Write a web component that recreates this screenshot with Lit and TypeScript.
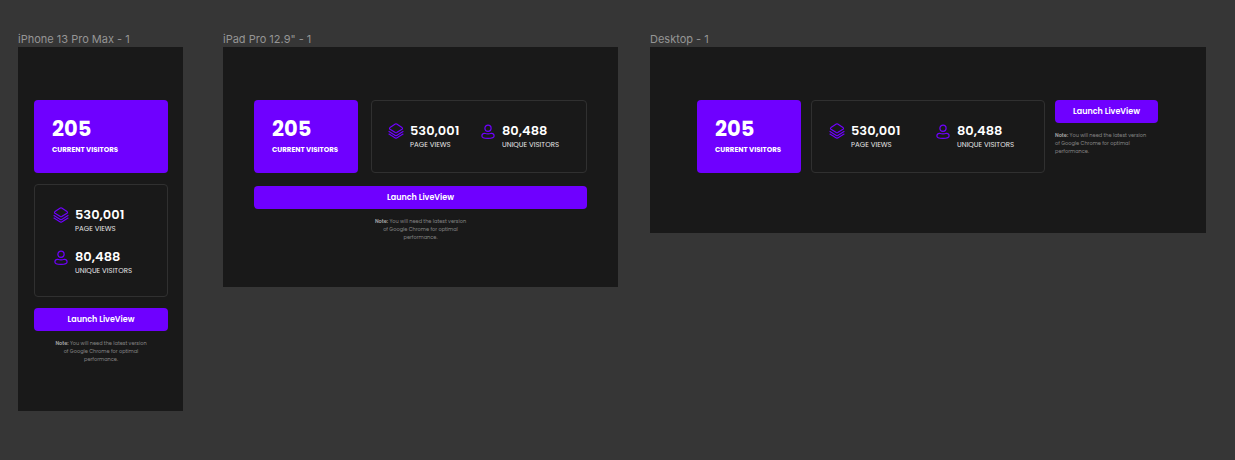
import { LitElement, html, css, svg } from "lit";
import { customElement, property } from "lit/decorators.js";

const layersIcon = svg`
  <path d="M7.3 1.1Q8 .7 8.7 1.1L14 4.6Q15 5.4 14 6.2L8.7 9.6Q8 10 7.3 9.6L2 6.2Q1 5.4 2 4.6Z" />
  <path d="M1 8.5 7.3 12.4Q8 12.8 8.7 12.4L15 8.5" />
  <path d="M1 11.1 7.3 15Q8 15.4 8.7 15L15 11.1" />
`;

const personIcon = svg`
  <circle cx="8" cy="5.2" r="3.1" />
  <path d="M4.6 10.3Q8 11.4 11.4 10.3C13 10.1 14.1 11.4 14.1 13 14.1 14.5 12.8 15.4 8 15.4S1.9 14.5 1.9 13C1.9 11.4 3 10.1 4.6 10.3Z" />
`;

type Layout = "phone" | "tablet" | "desktop";

@customElement("visitor-panel")
class VisitorPanel extends LitElement {
  @property({ reflect: true }) layout: Layout = "phone";

  static styles = css`
    :host {
      display: block;
      background: #191919;
      color: #fff;
      font-family: Poppins, Inter, "Open Sans", sans-serif;
    }
    .panel {
      display: grid;
      align-items: start;
    }
    .current {
      background: #6f00ff;
      border-radius: 4px;
      padding: 18px 18px 19px;
    }
    .total {
      margin: 0 0 6px;
      font-size: 21px;
      line-height: 22px;
      font-weight: 700;
    }
    .caption {
      margin: 0;
      font-size: 7px;
      line-height: 8px;
      font-weight: 700;
      white-space: nowrap;
    }
    .stats {
      display: grid;
      border: 1px solid #303030;
      border-radius: 4px;
      row-gap: 16px;
    }
    .stat {
      display: flex;
      gap: 6px;
    }
    .icon {
      width: 16px;
      height: 16px;
      flex: none;
      fill: none;
      stroke: #6f00ff;
      stroke-width: 1.2;
      stroke-linecap: round;
      stroke-linejoin: round;
    }
    .value {
      margin: 0 0 2px;
      font-size: 13px;
      line-height: 16px;
      font-weight: 600;
    }
    .label {
      margin: 0;
      font-size: 7px;
      line-height: 8px;
      color: #e6e6e6;
      white-space: nowrap;
    }
    .launch {
      display: block;
      width: 100%;
      border: 0;
      border-radius: 4px;
      padding: 6px 0 5px;
      background: #6f00ff;
      color: #fff;
      font-family: inherit;
      font-size: 8px;
      line-height: 12px;
      font-weight: 600;
      cursor: pointer;
    }
    .note {
      max-width: 104px;
      margin: 9px auto 0;
      font-size: 5px;
      line-height: 8px;
      text-align: center;
      color: #858585;
    }
    .note b {
      font-weight: 600;
      color: #a6a6a6;
    }

    .phone {
      padding: 53px 15px 47px 16px;
      row-gap: 11px;
    }
    .phone .stats {
      padding: 22px 18px 21px;
    }

    .tablet {
      padding: 53px 31px 45px;
      grid-template-columns: 104px 1fr;
      gap: 13px;
    }
    .tablet .stats {
      grid-template-columns: 1fr auto;
      padding: 22px 27px 23px 16px;
    }
    .tablet .action {
      grid-column: 1 / -1;
    }

    .desktop {
      padding: 53px 48px 60px 47px;
      grid-template-columns: 104px 1fr 103px;
      column-gap: 10px;
    }
    .desktop .stats {
      grid-template-columns: 1fr auto;
      padding: 22px 30px 23px 17px;
    }
    .desktop .note {
      margin-left: 0;
      text-align: left;
    }
  `;

  render() {
    return html`
      <section class="panel ${this.layout}">
        <div class="current">
          <p class="total">205</p>
          <p class="caption">CURRENT VISITORS</p>
        </div>
        <div class="stats">
          ${this.stat(layersIcon, "530,001", "PAGE VIEWS")}
          ${this.stat(personIcon, "80,488", "UNIQUE VISITORS")}
        </div>
        <div class="action">
          <button class="launch" type="button">Launch LiveView</button>
          <p class="note">
            <b>Note:</b> You will need the latest version<br />of Google Chrome for optimal<br />performance.
          </p>
        </div>
      </section>
    `;
  }

  private stat(icon: unknown, value: string, label: string) {
    return html`
      <div class="stat">
        <svg class="icon" viewBox="0 0 16 16" aria-hidden="true">${icon}</svg>
        <div>
          <p class="value">${value}</p>
          <p class="label">${label}</p>
        </div>
      </div>
    `;
  }
}

@customElement("app-root")
class AppRoot extends LitElement {
  static styles = css`
    :host {
      display: block;
      min-height: 100vh;
      box-sizing: border-box;
      padding: 32px 29px 32px 18px;
      background: #363636;
      font-family: Inter, sans-serif;
    }
    .canvas {
      display: grid;
      grid-template-columns: 165fr 403fr 556fr;
      column-gap: 32px;
      align-items: start;
    }
    .frame {
      min-width: 0;
    }
    .tablet {
      margin: 0 0 0 8px;
    }
    .name {
      margin: 0;
      padding-bottom: 1px;
      font-size: 11px;
      line-height: 14px;
      font-weight: 400;
      color: #959595;
      white-space: nowrap;
    }
  `;

  render() {
    const frames: { name: string; layout: Layout }[] = [
      { name: "iPhone 13 Pro Max - 1", layout: "phone" },
      { name: 'iPad Pro 12.9" - 1', layout: "tablet" },
      { name: "Desktop - 1", layout: "desktop" },
    ];
    return html`
      <main class="canvas">
        ${frames.map(
          (f) => html`
            <div class="frame ${f.layout}">
              <h2 class="name">${f.name}</h2>
              <visitor-panel layout=${f.layout}></visitor-panel>
            </div>
          `
        )}
      </main>
    `;
  }
}
